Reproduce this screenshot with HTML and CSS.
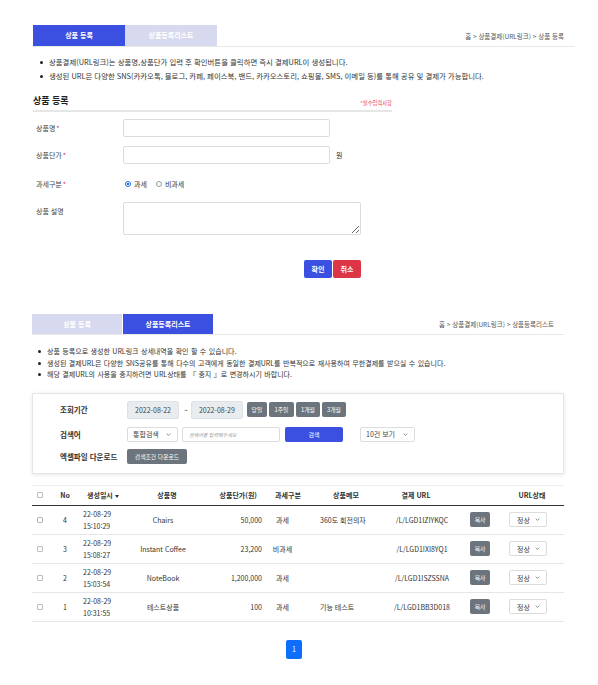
FILE: index.html
```html
<!DOCTYPE html>
<html lang="ko">
	<head>
		<meta charset="UTF-8">
		<title>상품 등록</title>
		<link rel="stylesheet" href="styles.css">
	</head>
	<body>
		<!-- 상품 등록 -->
		<div class="sec sec-reg">
			<div class="tabbar">
				<a class="tab on">상품 등록</a>
				<a class="tab">상품등록리스트</a>
				<span class="crumb">홈 &gt; 상품결제(URL링크) &gt; 상품 등록</span>
			</div>
			<ul class="notice">
				<li>상품결제(URL링크)는 상품명,상품단가 입력 후 확인버튼을 클릭하면 즉시 결제URL이 생성됩니다.</li>
				<li>생성된 URL은 다양한 SNS(카카오톡, 블로그, 카페, 페이스북, 밴드, 카카오스토리, 쇼핑몰, SMS, 이메일 등)를 통해 공유 및 결제가 가능합니다.</li>
			</ul>
			<div class="form">
				<div class="form-head">
					<h3>상품 등록</h3>
					<span class="req">*필수입력사항</span>
				</div>
				<div class="row r1">
					<label class="lbl">상품명<em>*</em></label>
					<input type="text" class="ipt">
				</div>
				<div class="row r2">
					<label class="lbl">상품단가<em>*</em></label>
					<input type="text" class="ipt">
					<span class="unit">원</span>
				</div>
				<div class="row r3">
					<label class="lbl">과세구분<em>*</em></label>
					<label class="rd"><input type="radio" name="tax" checked>과세</label>
					<label class="rd"><input type="radio" name="tax">비과세</label>
				</div>
				<div class="row r4">
					<label class="lbl">상품 설명</label>
					<textarea></textarea>
				</div>
				<div class="btns">
					<button class="btn blue">확인</button>
					<button class="btn red">취소</button>
				</div>
			</div>
		</div>

		<!-- 상품등록리스트 -->
		<div class="sec sec-list">
			<div class="tabbar">
				<a class="tab">상품 등록</a>
				<a class="tab on">상품등록리스트</a>
				<span class="crumb">홈 &gt; 상품결제(URL링크) &gt; 상품등록리스트</span>
			</div>
			<ul class="notice">
				<li>상품 등록으로 생성한 URL링크 상세내역을 확인 할 수 있습니다.</li>
				<li>생성된 결제URL은 다양한 SNS공유를 통해 다수의 고객에게 동일한 결제URL를 반복적으로 재사용하여 무한결제를 받으실 수 있습니다.</li>
				<li>해당 결제URL의 사용을 중지하려면 URL상태를 『 중지 』로 변경하시기 바랍니다.</li>
			</ul>

			<div class="search">
				<div class="srow s1">
					<span class="slbl">조회기간</span>
					<span class="date">2022-08-22</span>
					<span class="tilde">~</span>
					<span class="date">2022-08-29</span>
					<button class="gbtn w20 first">당일</button>
					<button class="gbtn w25">1주일</button>
					<button class="gbtn w24">1개월</button>
					<button class="gbtn w24">3개월</button>
				</div>
				<div class="srow s2">
					<span class="slbl">검색어</span>
					<span class="sel kind">통합검색<svg class="chev" viewBox="0 0 8 5"><path d="M1 1l3 3 3-3" fill="none" stroke="#555" stroke-width="1.1"/></svg></span>
					<span class="kw">검색어를 입력해주세요</span>
					<button class="sbtn">검색</button>
					<span class="sel cnt">10건 보기<svg class="chev" viewBox="0 0 8 5"><path d="M1 1l3 3 3-3" fill="none" stroke="#555" stroke-width="1.1"/></svg></span>
				</div>
				<div class="srow s3">
					<span class="slbl">엑셀파일 다운로드</span>
					<button class="gbtn w60">검색조건 다운로드</button>
				</div>
			</div>

			<table class="list">
				<colgroup>
					<col style="width:16px"><col style="width:34px"><col style="width:34px"><col style="width:102px"><col style="width:50px">
					<col style="width:40px"><col style="width:76px"><col style="width:76px"><col style="width:40px"><col style="width:64px">
				</colgroup>
				<thead>
					<tr>
						<th><input type="checkbox" class="chk"></th>
						<th>No</th>
						<th class="c-date">생성일시<span class="sort"></span></th>
						<th>상품명</th>
						<th class="c-price">상품단가(원)</th>
						<th>과세구분</th>
						<th>상품메모</th>
						<th class="c-url">결제 URL</th>
						<th></th>
						<th>URL상태</th>
					</tr>
				</thead>
				<tbody>
					<tr>
						<td><input type="checkbox" class="chk"></td>
						<td>4</td>
						<td class="c-date">22-08-29<br>15:10:29</td>
						<td class="c-name">Chairs</td>
						<td class="c-price">50,000</td>
						<td class="c-tax">과세</td>
						<td class="c-memo">360도 회전의자</td>
						<td>/L/LGD1IZIYKQC</td>
						<td><button class="cbtn">복사</button></td>
						<td class="c-state"><span class="sel st">정상<svg class="chev" viewBox="0 0 8 5"><path d="M1 1l3 3 3-3" fill="none" stroke="#555" stroke-width="1.1"/></svg></span></td>
					</tr>
					<tr>
						<td><input type="checkbox" class="chk"></td>
						<td>3</td>
						<td class="c-date">22-08-29<br>15:08:27</td>
						<td class="c-name">Instant Coffee</td>
						<td class="c-price">23,200</td>
						<td class="c-tax">비과세</td>
						<td class="c-memo"></td>
						<td>/L/LGD1IXI8YQ1</td>
						<td><button class="cbtn">복사</button></td>
						<td class="c-state"><span class="sel st">정상<svg class="chev" viewBox="0 0 8 5"><path d="M1 1l3 3 3-3" fill="none" stroke="#555" stroke-width="1.1"/></svg></span></td>
					</tr>
					<tr>
						<td><input type="checkbox" class="chk"></td>
						<td>2</td>
						<td class="c-date">22-08-29<br>15:03:54</td>
						<td class="c-name">NoteBook</td>
						<td class="c-price">1,200,000</td>
						<td class="c-tax">과세</td>
						<td class="c-memo"></td>
						<td>/L/LGD1ISZSSNA</td>
						<td><button class="cbtn">복사</button></td>
						<td class="c-state"><span class="sel st">정상<svg class="chev" viewBox="0 0 8 5"><path d="M1 1l3 3 3-3" fill="none" stroke="#555" stroke-width="1.1"/></svg></span></td>
					</tr>
					<tr>
						<td><input type="checkbox" class="chk"></td>
						<td>1</td>
						<td class="c-date">22-08-29<br>10:31:55</td>
						<td class="c-name">테스트상품</td>
						<td class="c-price">100</td>
						<td class="c-tax">과세</td>
						<td class="c-memo">기능 테스트</td>
						<td>/L/LGD1BB3D018</td>
						<td><button class="cbtn">복사</button></td>
						<td class="c-state"><span class="sel st">정상<svg class="chev" viewBox="0 0 8 5"><path d="M1 1l3 3 3-3" fill="none" stroke="#555" stroke-width="1.1"/></svg></span></td>
					</tr>
				</tbody>
			</table>

			<div class="pager"><a class="pg">1</a></div>
		</div>
	</body>
</html>
```

FILE: styles.css
```css
*{margin: 0;padding: 0;box-sizing: border-box;}
body{
	font-family: "Noto Sans CJK KR", "Noto Sans", sans-serif;
	color: #333;
	background: #fff;
}
button{font-family: inherit;border: none;cursor: pointer;}
ul{list-style: none;}

/* 탭 */
.tabbar{
	display: flex;
	align-items: center;
	border-bottom: 1px solid #e8e8e8;
}
.tab{
	display: block;
	text-align: center;
	font-size: 7px;
	font-weight: bold;
	color: #fff;
	background: #d7daee;
}
.tab.on{background: #3b4fe0;}
.crumb{
	margin-left: auto;
	font-size: 6.5px;
	color: #555;
}

/* 안내문 */
.notice li{
	position: relative;
	padding-left: 9px;
	color: #333;
}
.notice li::before{
	content: "";
	position: absolute;
	left: 0;
	top: 50%;
	width: 3px;
	height: 3px;
	margin-top: -1.5px;
	border-radius: 50%;
	background: #222;
}

/* 상품 등록 */
.sec-reg{
	width: 575px;
	padding: 25px 0 0 33px;
}
.sec-reg .tab{
	width: 92px;
	height: 21px;
	line-height: 21px;
}
.sec-reg .crumb{padding-right: 11px;}
.sec-reg .notice{
	margin: 8px 0 0 7px;
	font-size: 7.4px;
	line-height: 14px;
}
.form{
	width: 359px;
	margin-top: 11px;
}
.form-head{
	display: flex;
	align-items: flex-end;
	justify-content: space-between;
	padding-bottom: 2px;
	border-bottom: 2px solid #e6e6e6;
}
.form-head h3{
	font-size: 9px;
	line-height: 14px;
	color: #222;
}
.req{
	font-size: 5.3px;
	line-height: 9px;
	color: #e8344a;
}
.row{
	display: flex;
	align-items: center;
}
.lbl{
	width: 90px;
	padding-left: 3px;
	font-size: 7px;
	line-height: 18px;
	color: #444;
}
.lbl em{
	font-style: normal;
	color: #e02b2b;
	margin-left: 1px;
}
.r1{margin-top: 7px;}
.r2{margin-top: 9px;}
.r3{margin-top: 11px;height: 18px;}
.r4{margin-top: 9px;align-items: flex-start;}
.ipt{
	width: 207px;
	height: 18px;
	border: 1px solid #dcdcdc;
	border-radius: 2px;
}
.unit{
	margin-left: 6px;
	font-size: 7px;
}
.rd{
	display: flex;
	align-items: center;
	font-size: 7px;
	color: #333;
	margin-right: 9px;
}
.r3 .lbl + .rd{margin-left: 2px;}
.rd input{
	appearance: none;
	width: 6px;
	height: 6px;
	margin-right: 3px;
	border: 1px solid #999;
	border-radius: 50%;
	background: #fff;
}
.rd input:checked{
	border-color: #1a6fe8;
	background: radial-gradient(#1a6fe8 40%, #fff 48%);
}
textarea{
	width: 238px;
	height: 33px;
	border: 1px solid #dcdcdc;
	border-radius: 2px;
}
.btns{
	display: flex;
	justify-content: flex-end;
	gap: 1px;
	width: 238px;
	margin: 25px 0 0 90px;
}
.btn{
	width: 28px;
	height: 18px;
	border-radius: 2px;
	font-size: 7px;
	font-weight: bold;
	color: #fff;
}
.btn.blue{background: #3b4fe0;}
.btn.red{background: #dc3545;}

/* 상품등록리스트 */
.sec-list{
	width: 564px;
	padding: 36px 0 0 32px;
}
.sec-list .tab{
	width: 90px;
	height: 20px;
	line-height: 20px;
}
.sec-list .tab:first-child{margin-right: 1px;}
.sec-list .crumb{padding-right: 10px;}
.sec-list .notice{
	margin: 11px 0 0 6px;
	font-size: 7px;
	line-height: 11.5px;
	word-spacing: 0.5px;
}

/* 검색 */
.search{
	margin-top: 12px;
	padding: 7px 0 9px 27px;
	border: 1px solid #e5e5e5;
	box-shadow: 0 1px 4px rgba(0,0,0,.1);
}
.srow{
	display: flex;
	align-items: center;
}
.s1{height: 18px;}
.s2{height: 15px;margin-top: 8px;}
.s3{height: 15px;margin-top: 7px;}
.slbl{
	width: 67px;
	font-size: 7.5px;
	font-weight: bold;
	color: #333;
}
.date{
	width: 52px;
	height: 18px;
	line-height: 16px;
	text-align: center;
	font-size: 7px;
	color: #444;
	background: #e9ecef;
	border: 1px solid #dee2e6;
	border-radius: 2px;
}
.tilde{
	margin: 0 3px 0 5px;
	font-size: 7px;
	color: #555;
}
.gbtn{
	height: 15px;
	margin-left: 2px;
	border-radius: 2px;
	background: #6c757d;
	color: #fff;
	font-size: 5.8px;
}
.gbtn.first{margin-left: 4px;}
.w20{width: 20px;}
.w24{width: 24px;}
.w25{width: 25px;}
.w60{width: 60px;margin-left: 0;}
.sel{
	display: flex;
	align-items: center;
	justify-content: space-between;
	height: 15px;
	padding: 0 6px 0 5px;
	border: 1px solid #dcdcdc;
	border-radius: 2px;
	background: #fff;
	font-size: 7px;
	color: #444;
}
.chev{width: 5px;height: 3px;}
.sel.kind{width: 51px;}
.sel.cnt{width: 55px;margin-left: 17px;}
.kw{
	width: 98px;
	height: 15px;
	margin-left: 4px;
	padding-left: 6px;
	line-height: 13px;
	border: 1px solid #dcdcdc;
	border-radius: 2px;
	font-size: 5px;
	font-style: italic;
	color: #999;
}
.sbtn{
	width: 58px;
	height: 15px;
	margin-left: 5px;
	border-radius: 2px;
	background: #3b4fe0;
	color: #fff;
	font-size: 6px;
}

/* 목록 */
.list{
	width: 532px;
	margin-top: 11px;
	border-collapse: collapse;
	table-layout: fixed;
	font-size: 7px;
	color: #333;
}
.list th{
	height: 20px;
	font-weight: bold;
	text-align: center;
	white-space: nowrap;
	border-top: 1px solid #eee;
	border-bottom: 1px solid #333;
}
.list td{
	height: 29px;
	text-align: center;
	line-height: 12px;
	white-space: nowrap;
	border-bottom: 1px solid #e6e6e6;
}
.list th.c-date{text-align: left;padding-left: 5px;}
.list td.c-date{text-align: left;padding-left: 1px;}
.list th.c-price{text-align: right;padding-right: 11px;}
.list td.c-price{text-align: right;padding-right: 6px;}
.list th.c-url{padding-right: 12px;}
.list td.c-name{padding-right: 8px;}
.list td.c-tax{padding-right: 11px;}
.list td.c-memo{text-align: left;padding-left: 12px;}
.list td.c-state{padding-right: 8px;}
.sort{
	display: inline-block;
	margin-left: 2px;
	vertical-align: middle;
	border-left: 2.5px solid transparent;
	border-right: 2.5px solid transparent;
	border-top: 3px solid #333;
}
.chk{
	appearance: none;
	display: block;
	width: 6px;
	height: 6px;
	margin: 0 auto;
	border: 1px solid #bbb;
	border-radius: 1px;
	background: #fff;
}
.cbtn{
	width: 20px;
	height: 15px;
	border-radius: 2px;
	background: #6c757d;
	color: #fff;
	font-size: 5.8px;
}
.sel.st{
	width: 38px;
	margin: 0 auto;
	padding: 0 6px 0 7px;
}

/* 페이지 */
.pager{
	display: flex;
	justify-content: center;
	padding-right: 8px;
	margin-top: 18px;
}
.pg{
	display: block;
	width: 16px;
	height: 19px;
	line-height: 19px;
	text-align: center;
	border-radius: 2px;
	background: #0d6efd;
	color: #fff;
	font-size: 7px;
}
```
